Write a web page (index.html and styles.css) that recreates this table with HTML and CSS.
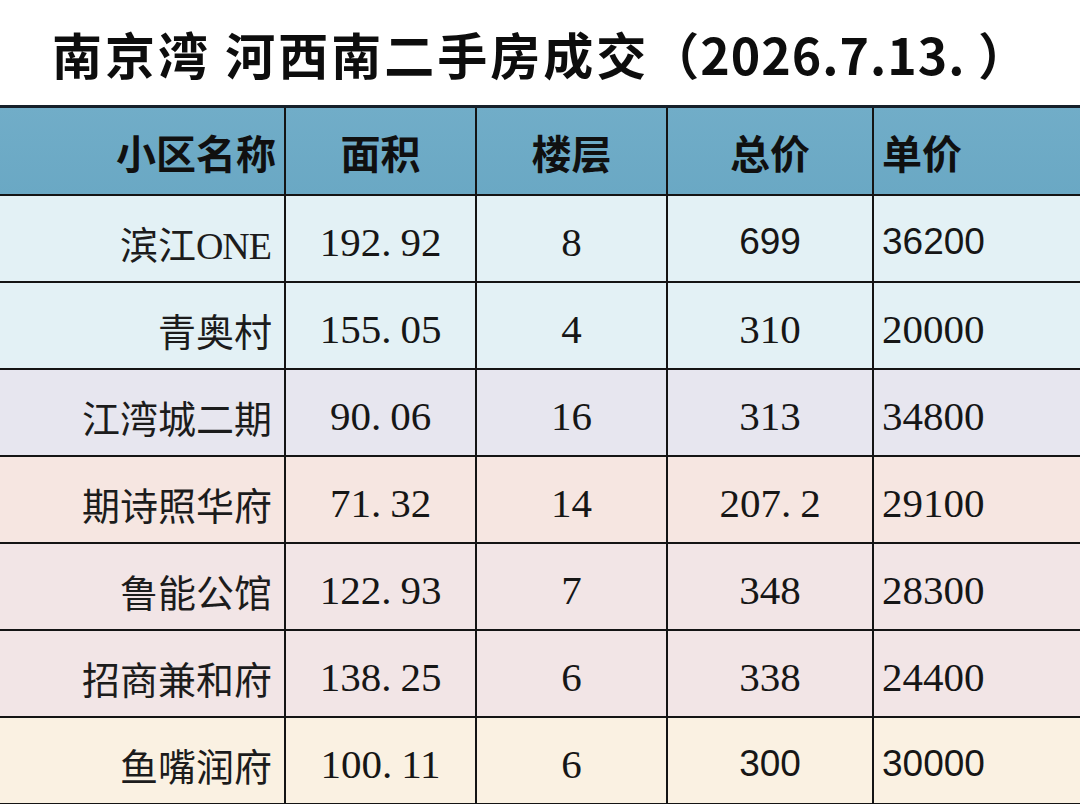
FILE: index.html
```html
<!DOCTYPE html>
<html lang="zh-CN">
<head>
<meta charset="utf-8">
<title>南京湾 河西南二手房成交</title>
<link rel="stylesheet" href="styles.css">
</head>
<body>
<h1 class="title">南京湾 河西南二手房成交<span class="date">（2026.7.13. ）</span></h1>
<table class="deals">
  <colgroup>
    <col class="c-name"><col class="c-area"><col class="c-floor"><col class="c-total"><col class="c-unit">
  </colgroup>
  <thead>
    <tr>
      <th class="name">小区名称</th>
      <th>面积</th>
      <th>楼层</th>
      <th>总价</th>
      <th class="unit">单价</th>
    </tr>
  </thead>
  <tbody>
    <tr class="r-cyan">
      <td class="name">滨江<span class="lat">ONE</span></td>
      <td class="num">192<span class="pt">.</span>92</td>
      <td class="num">8</td>
      <td class="num sans">699</td>
      <td class="num unit sans">36200</td>
    </tr>
    <tr class="r-cyan">
      <td class="name">青奥村</td>
      <td class="num">155<span class="pt">.</span>05</td>
      <td class="num">4</td>
      <td class="num">310</td>
      <td class="num unit">20000</td>
    </tr>
    <tr class="r-lav">
      <td class="name">江湾城二期</td>
      <td class="num">90<span class="pt">.</span>06</td>
      <td class="num">16</td>
      <td class="num">313</td>
      <td class="num unit">34800</td>
    </tr>
    <tr class="r-peach">
      <td class="name">期诗照华府</td>
      <td class="num">71<span class="pt">.</span>32</td>
      <td class="num">14</td>
      <td class="num">207<span class="pt">.</span>2</td>
      <td class="num unit">29100</td>
    </tr>
    <tr class="r-pink">
      <td class="name">鲁能公馆</td>
      <td class="num">122<span class="pt">.</span>93</td>
      <td class="num">7</td>
      <td class="num">348</td>
      <td class="num unit">28300</td>
    </tr>
    <tr class="r-pink">
      <td class="name">招商兼和府</td>
      <td class="num">138<span class="pt">.</span>25</td>
      <td class="num">6</td>
      <td class="num">338</td>
      <td class="num unit">24400</td>
    </tr>
    <tr class="r-cream">
      <td class="name">鱼嘴润府</td>
      <td class="num">100<span class="pt">.</span>11</td>
      <td class="num">6</td>
      <td class="num sans">300</td>
      <td class="num unit sans">30000</td>
    </tr>
  </tbody>
</table>
</body>
</html>
```

FILE: styles.css
```css
html, body {
  margin: 0;
  padding: 0;
  background: #ffffff;
  overflow: hidden;
}

body {
  width: 1080px;
  height: 804px;
  font-family: "Noto Sans CJK SC", "Liberation Sans", sans-serif;
  color: #141414;
}

.title {
  margin: 0;
  height: 105px;
  box-sizing: border-box;
  padding: 22px 0 0 52px;
  font-size: 50px;
  line-height: 62px;
  font-weight: 700;
  letter-spacing: 3px;
  color: #0d0d0d;
  white-space: pre;
}

.title .date {
  letter-spacing: 1px;
}

.deals {
  width: 1080px;
  table-layout: fixed;
  border-collapse: collapse;
  border-top: 3px solid #16202a;
}

.c-name { width: 285px; }
.c-area { width: 191px; }
.c-floor { width: 191px; }
.c-total { width: 206px; }
.c-unit { width: 207px; }

.deals th,
.deals td {
  border: 2px solid #141414;
  padding: 0;
  vertical-align: middle;
  text-align: center;
  overflow: hidden;
  white-space: nowrap;
}

.deals th:first-child,
.deals td:first-child {
  border-left: none;
}

.deals th:last-child,
.deals td:last-child {
  border-right: none;
}

.deals thead tr {
  height: 88px;
  background: linear-gradient(#71adc8, #6aa8c4);
}

.deals th {
  font-size: 40px;
  font-weight: 700;
  color: #101010;
  border-top: none;
  padding-top: 2px;
}

.deals th.name {
  text-align: right;
  padding-right: 8px;
}

.deals th.unit,
.deals td.unit {
  text-align: left;
  padding-left: 8px;
}

.deals tbody tr {
  height: 87px;
}

.deals td {
  padding-top: 8px;
  color: #1a1a1a;
}

.deals td.name {
  text-align: right;
  padding-right: 12px;
  font-family: "Noto Sans CJK SC", serif;
  font-size: 38px;
  font-weight: 400;
  color: #1c1c1c;
}

.deals td.name .lat {
  font-family: "Liberation Serif", serif;
  letter-spacing: -1px;
  padding-right: 1px;
}

.deals td.num {
  font-family: "Liberation Serif", serif;
  font-size: 41px;
  color: #161616;
}

.deals td.sans {
  font-family: "Liberation Sans", sans-serif;
  font-size: 37px;
}

.pt {
  display: inline-block;
  margin-right: 9px;
}

.r-cyan { background: #e3f1f5; }
.r-lav { background: #e7e6ef; }
.r-peach { background: #f6e6e1; }
.r-pink { background: #f2e5e6; }
.r-cream { background: #faf1e2; }
```
